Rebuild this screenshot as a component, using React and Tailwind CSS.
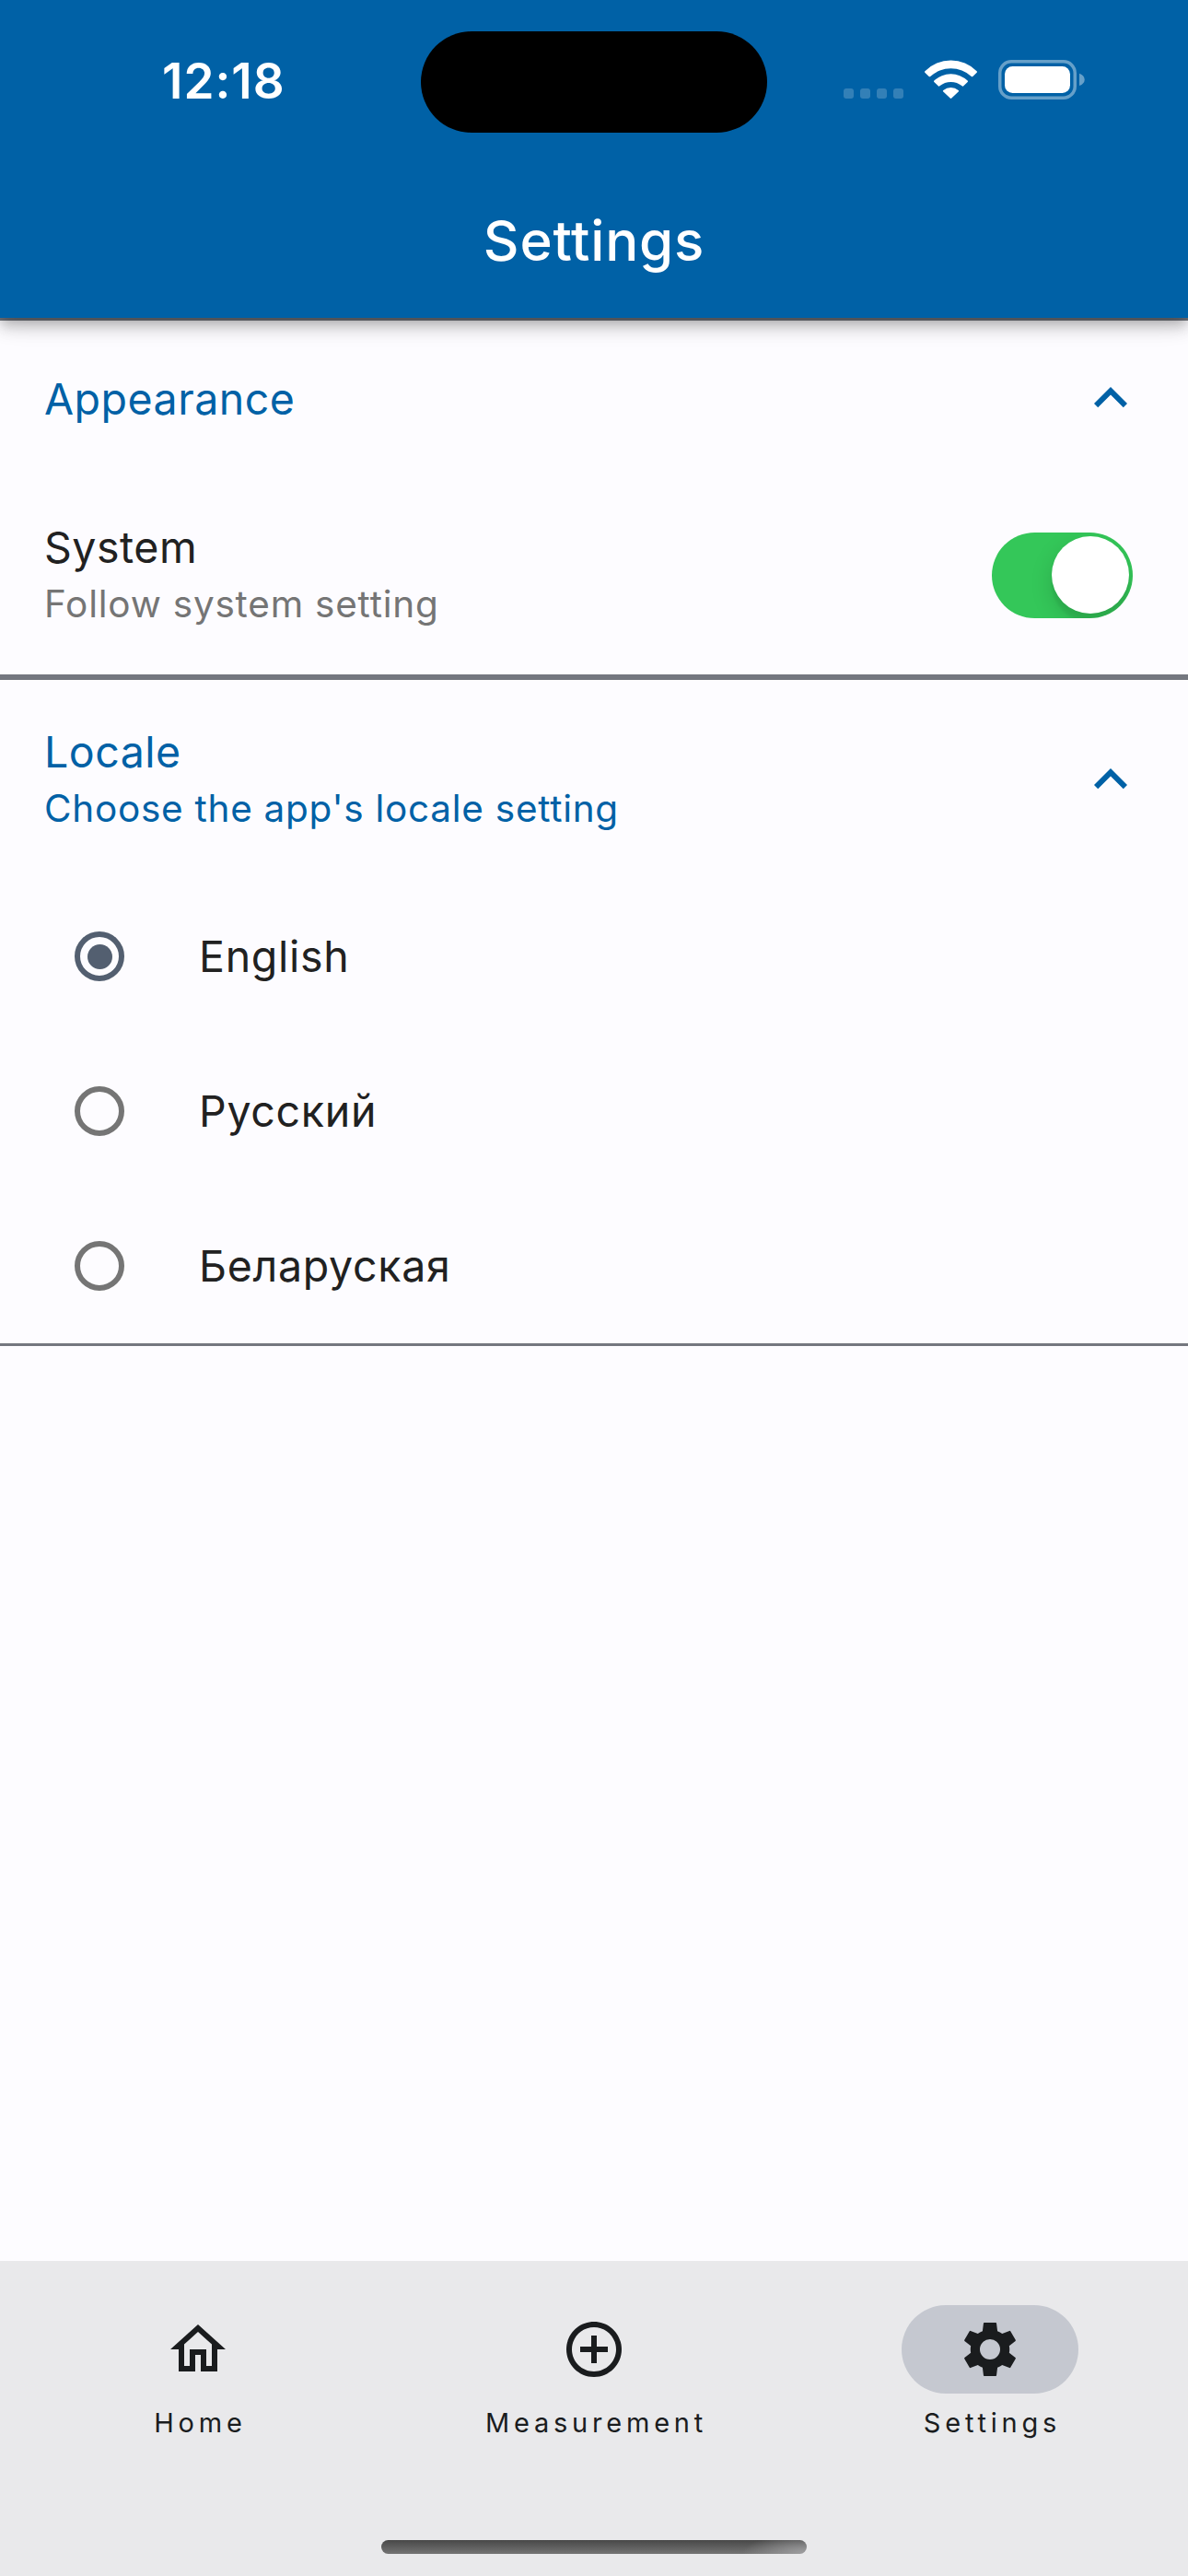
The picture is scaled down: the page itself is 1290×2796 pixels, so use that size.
import React from "react";

const CHEVRON = "M12 8l-6 6 1.41 1.41L12 10.83l4.59 4.58L18 14z";
const HOME = "M12 5.69l5 4.5V18h-2v-6H9v6H7v-7.81l5-4.5M12 3L2 12h3v8h6v-6h2v6h6v-8h3L12 3z";
const ADD =
  "M13 7h-2v4H7v2h4v4h2v-4h4v-2h-4V7zm-1-5C6.48 2 2 6.48 2 12s4.48 10 10 10 10-4.48 10-10S17.52 2 12 2zm0 18c-4.41 0-8-3.59-8-8s3.59-8 8-8 8 3.59 8 8-3.59 8-8 8z";
const GEAR =
  "M9.9 2.35H14.1Q14.32 2.35 14.35 2.6L14.7 5.4Q15.7 5.75 16.4 6.35L19.05 5.3Q19.25 5.2 19.4 5.4L21.25 8.6Q21.35 8.85 21.2 9L18.95 10.75Q19.2 12 18.95 13.25L21.2 15Q21.35 15.15 21.25 15.4L19.4 18.6Q19.25 18.8 19.05 18.7L16.4 17.65Q15.7 18.25 14.7 18.6L14.35 21.4Q14.32 21.65 14.1 21.65H9.9Q9.68 21.65 9.65 21.4L9.3 18.6Q8.3 18.25 7.6 17.65L4.95 18.7Q4.75 18.8 4.6 18.6L2.75 15.4Q2.65 15.15 2.8 15L5.05 13.25Q4.8 12 5.05 10.75L2.8 9Q2.65 8.85 2.75 8.6L4.6 5.4Q4.75 5.2 4.95 5.3L7.6 6.35Q8.3 5.75 9.3 5.4L9.65 2.6Q9.68 2.35 9.9 2.35ZM12 8.33A3.67 3.67 0 0 0 12 15.67A3.67 3.67 0 0 0 12 8.33Z";

function Icon({ d }) {
  return (
    <svg viewBox="0 0 24 24" className="size-[72px] shrink-0" fill="currentColor" fillRule="evenodd">
      <path d={d} />
    </svg>
  );
}

function StatusIcons() {
  return (
    <svg width="262" height="44" viewBox="0 0 262 44" fill="#fff">
      {[0, 18, 36, 54].map((x) => (
        <rect key={x} x={x} y="31" width="11" height="11" rx="3" opacity="0.2" />
      ))}
      <path d="M117.3 41.6Q116.5 42.400 115.700 41.600L108 34.200Q107.500 33.500 108.300 32.900A13.500 13.500 0 0 1 124.700 32.900Q125.500 33.500 125 34.200Z" />
      <path d="M98.400 22.600A26 26 0 0 1 134.600 22.600Q135.400 23.300 134.700 24L130 28.400Q129.300 28.900 128.600 28.300A19 19 0 0 0 104.400 28.300Q103.700 28.900 103 28.400L98.300 24Q97.600 23.300 98.400 22.600Z" />
      <path d="M88.400 12.300A39.500 39.500 0 0 1 144.600 12.300Q145.400 13.100 144.700 13.800L140.300 18Q139.500 18.600 138.800 18A33 33 0 0 0 94.200 18Q93.500 18.600 92.700 18L88.300 13.800Q87.600 13.100 88.400 12.300Z" />
      <rect x="169.750" y="1.750" width="81.500" height="39.500" rx="12.500" fill="none" stroke="#fff" strokeWidth="3.500" opacity="0.400" />
      <rect x="175" y="7" width="71" height="29" rx="8.500" />
      <path d="M256 14.700Q261.700 17 261.700 21.400Q261.700 25.800 256 28.100Z" opacity="0.400" />
    </svg>
  );
}

function TileText({ title, subtitle, subtitleClass }) {
  return (
    <div className="pt-[2px]">
      <div className="text-[46.500px] leading-[62px] tracking-[0.500px]">{title}</div>
      {subtitle && <div className={`text-[40.500px] leading-[62px] ${subtitleClass}`}>{subtitle}</div>}
    </div>
  );
}

function SectionHeader({ title, subtitle }) {
  return (
    <div className={`flex items-center justify-between px-12 text-[#0061a6] ${subtitle ? "h-[216px]" : "h-[168px]"}`}>
      <TileText title={title} subtitle={subtitle} subtitleClass="tracking-[0.720px]" />
      <Icon d={CHEVRON} />
    </div>
  );
}

function RadioRow({ label, checked }) {
  return (
    <div className="flex h-[168px] items-center pl-[81px]">
      <div className={`flex size-[54px] items-center justify-center rounded-full border-[6px] ${checked ? "border-[#535f70]" : "border-[#757575]"}`}>
        {checked && <div className="size-[27px] rounded-full bg-[#535f70]" />}
      </div>
      <span className="ml-[81px] pt-[2px] text-[46.500px] tracking-[0.700px]">{label}</span>
    </div>
  );
}

function NavItem({ d, label, active }) {
  return (
    <div className="flex flex-1 flex-col items-center pt-12">
      <div className={`flex h-24 w-48 items-center justify-center rounded-full ${active ? "bg-[#c5c8d0]" : ""}`}>
        <Icon d={d} />
      </div>
      <span className="mt-3 pl-[5px] text-[29px] leading-10 tracking-[4.800px]">{label}</span>
    </div>
  );
}

export default function App() {
  return (
    <div className="flex h-[2796px] w-[1290px] flex-col overflow-hidden bg-[#fdfcff] font-[Inter,sans-serif] text-[#212121]">
      <header className="relative h-[345px] bg-[#0061a6] text-white shadow-[0_6px_12px_-3px_rgba(0,0,0,0.2),0_12px_15px_0_rgba(0,0,0,0.14),0_3px_30px_0_rgba(0,0,0,0.12)]">
        <div className="flex h-[177px] items-start">
          <div className="w-[457px] pl-[176px] pt-[56px] text-[53px] font-semibold leading-[64px] tracking-[1px]">12:18</div>
          <div className="mt-[34px] h-[110px] w-[376px] rounded-full bg-black" />
          <div className="ml-[83px] mt-[65px]">
            <StatusIcons />
          </div>
        </div>
        <h1 className="flex h-[168px] items-center justify-center text-[60px] font-medium tracking-[0.800px]">Settings</h1>
      </header>

      <main className="flex-1 border-t-[3px] border-[#74777f]">
        <section className="border-b-[6px] border-[#74777f]">
          <SectionHeader title="Appearance" />
          <div className="flex h-[216px] items-center justify-between pl-12 pr-[60px]">
            <TileText title="System" subtitle="Follow system setting" subtitleClass="tracking-[0.780px] text-[#757575]" />
            <div className="flex h-[93px] w-[153px] items-center justify-end overflow-hidden rounded-full bg-[#34c759] pr-[4px]">
              <div className="size-[84px] rounded-full bg-white shadow-[0_9px_24px_rgba(0,0,0,0.150),0_9px_3px_rgba(0,0,0,0.060)]" />
            </div>
          </div>
        </section>
        <section className="border-b-[3px] border-[#74777f]">
          <SectionHeader title="Locale" subtitle="Choose the app's locale setting" />
          <RadioRow label="English" checked />
          <RadioRow label="Русский" />
          <RadioRow label="Беларуская" />
        </section>
      </main>

      <footer className="flex h-[342px] flex-col items-center bg-[#e9e9eb] text-[#1a1c1e]">
        <nav className="flex h-[303px] w-full">
          <NavItem d={HOME} label="Home" />
          <NavItem d={ADD} label="Measurement" />
          <NavItem d={GEAR} label="Settings" active />
        </nav>
        <div className="h-[15px] w-[462px] rounded-full bg-[radial-gradient(ellipse_70px_22px_at_100%_100%,#a0a0a2,transparent),linear-gradient(#484848,#747474)]" />
      </footer>
    </div>
  );
}
